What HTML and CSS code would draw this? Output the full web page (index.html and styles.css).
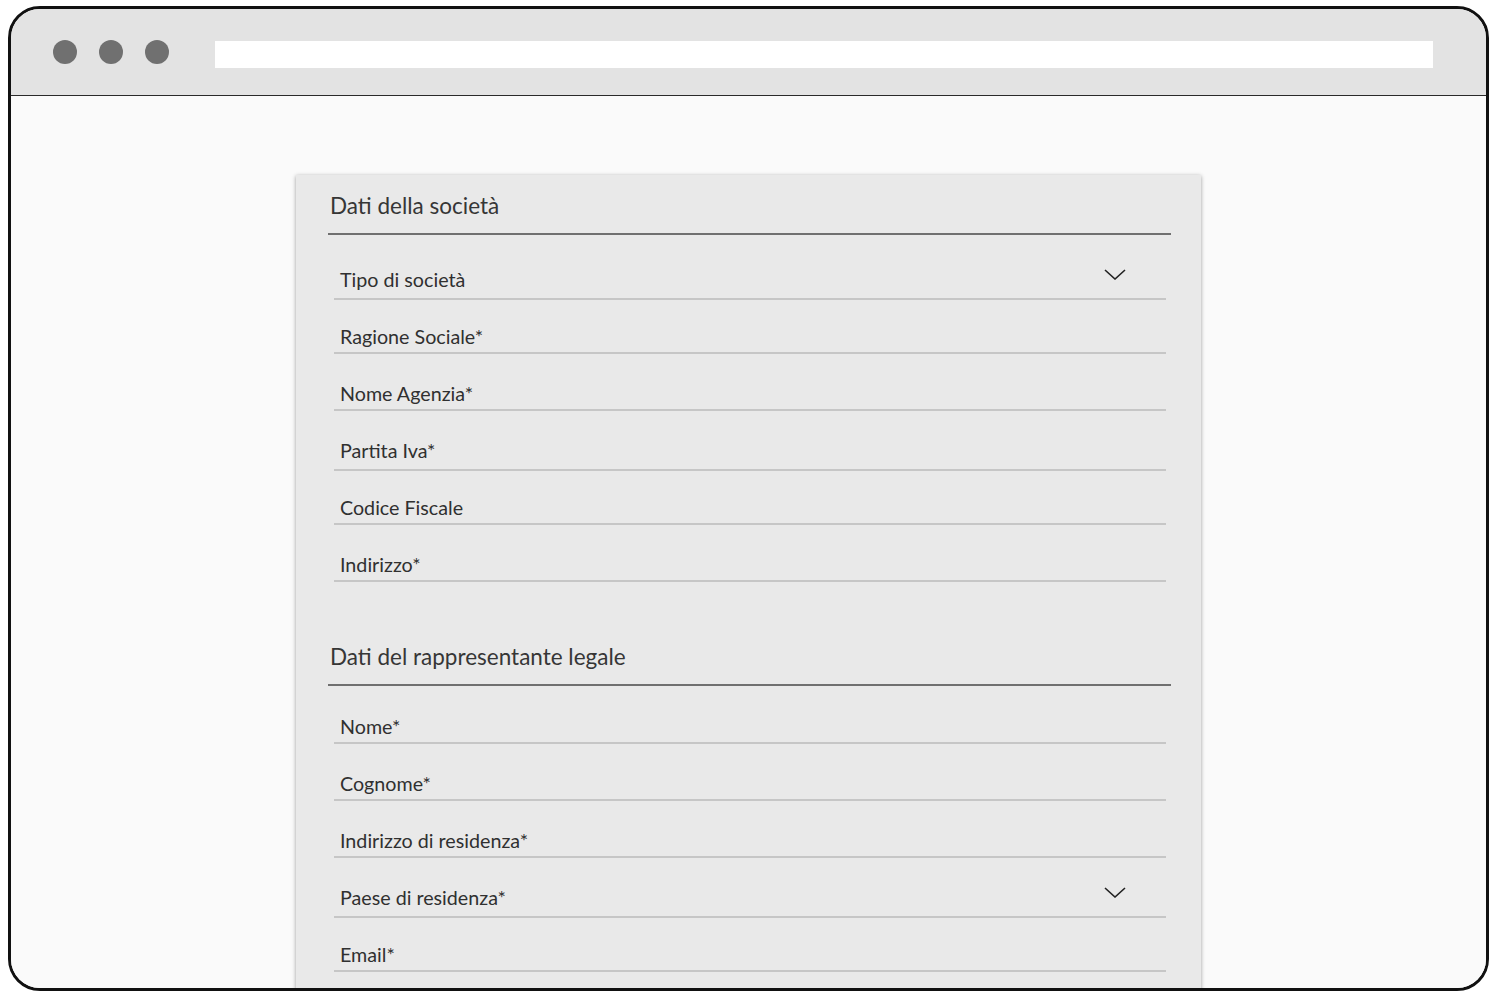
FILE: index.html
```html
<!DOCTYPE html>
<html lang="it">
<head>
<meta charset="utf-8">
<title>Dati della società</title>
<link rel="stylesheet" href="styles.css">
</head>
<body>
<div class="frame">
  <div class="chrome">
    <span class="dot"></span>
    <span class="dot"></span>
    <span class="dot"></span>
    <div class="address"></div>
  </div>
  <div class="content">
    <form class="card">
      <section class="section">
        <h2 class="section-title">Dati della società</h2>
        <div class="fields">
          <div class="field field--select">
            <span class="label">Tipo di società</span>
            <svg class="chevron" viewBox="0 0 22 11" width="22" height="11"><path d="M1 1 L11 10 L21 1" fill="none" stroke="#222" stroke-width="1.6"/></svg>
          </div>
          <div class="field"><span class="label">Ragione Sociale*</span></div>
          <div class="field"><span class="label">Nome Agenzia*</span></div>
          <div class="field field--low"><span class="label">Partita Iva*</span></div>
          <div class="field"><span class="label">Codice Fiscale</span></div>
          <div class="field"><span class="label">Indirizzo*</span></div>
        </div>
      </section>
      <section class="section section--second">
        <h2 class="section-title">Dati del rappresentante legale</h2>
        <div class="fields">
          <div class="field"><span class="label">Nome*</span></div>
          <div class="field"><span class="label">Cognome*</span></div>
          <div class="field"><span class="label">Indirizzo di residenza*</span></div>
          <div class="field field--select">
            <span class="label">Paese di residenza*</span>
            <svg class="chevron" viewBox="0 0 22 11" width="22" height="11"><path d="M1 1 L11 10 L21 1" fill="none" stroke="#222" stroke-width="1.6"/></svg>
          </div>
          <div class="field"><span class="label">Email*</span></div>
        </div>
      </section>
    </form>
  </div>
</div>
</body>
</html>
```

FILE: styles.css
```css
html, body {
  margin: 0;
  padding: 0;
  background: #ffffff;
}

body {
  font-family: "Lato", "Open Sans", sans-serif;
}

.frame {
  box-sizing: border-box;
  margin: 6px 0 0 8px;
  width: 1481px;
  height: 985px;
  border: 3px solid #111111;
  border-radius: 32px;
  overflow: hidden;
  display: flex;
  flex-direction: column;
  background: #fafafa;
}

.chrome {
  flex: 0 0 auto;
  height: 86px;
  background: #e3e3e3;
  border-bottom: 1px solid #2a2a2a;
  display: flex;
  align-items: center;
  padding: 0 53px 0 42px;
}

.dot {
  width: 24px;
  height: 24px;
  border-radius: 50%;
  background: #707070;
  margin-right: 22px;
  flex: 0 0 auto;
}

.address {
  flex: 1 1 auto;
  height: 27px;
  background: #ffffff;
  margin-left: 24px;
  margin-top: 4px;
}

.content {
  flex: 1 1 auto;
  background: #fafafa;
  padding-top: 79px;
}

.card {
  width: 905px;
  margin: 0 auto;
  background: #e9e9e9;
  box-shadow: 0 1px 4px rgba(0, 0, 0, 0.38);
  padding: 18px 35px 60px 32px;
  box-sizing: border-box;
}

.section-title {
  margin: 0 -5px 0 0;
  padding: 0 0 14px 2px;
  font-size: 22.5px;
  line-height: 26px;
  font-weight: 400;
  color: #363636;
  border-bottom: 2px solid #707070;
}

.section--second {
  margin-top: 62px;
}

.fields {
  margin: 5px 0 0 6px;
}

.section--second .fields {
  margin-top: 1px;
}

.field {
  position: relative;
  padding: 29px 0 4px 6px;
  border-bottom: 2px solid #c6c6c6;
}

.field--select {
  padding-bottom: 7px;
  margin-bottom: -3px;
}

.field--low {
  padding-bottom: 7px;
  margin-bottom: -3px;
}

.label {
  display: block;
  font-size: 19.7px;
  line-height: 22px;
  color: #303030;
}

.chevron {
  position: absolute;
  right: 40px;
  top: 29px;
}
```
